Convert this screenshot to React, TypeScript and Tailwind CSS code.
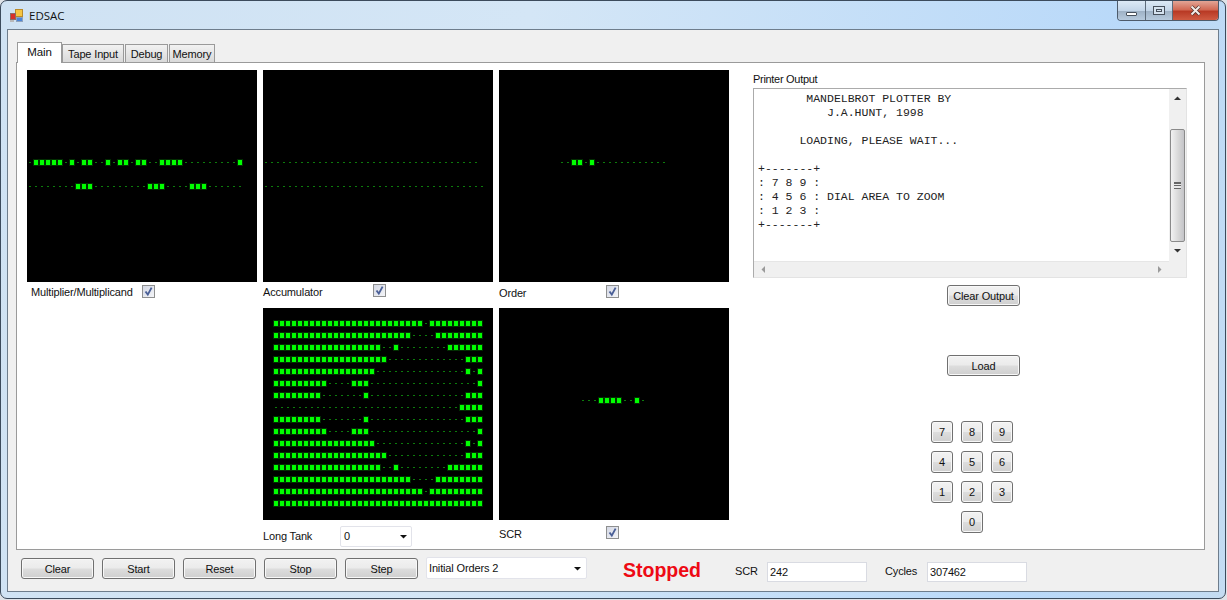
const BIG = "#00ff00";
const HALO = "#012e01";
const SMALL = "#0c7c0c";

type Row = { x: number; y: number; runs: number[] };

// runs alternate lit / unlit counts, starting with lit
function Display({ rows }: { rows: Row[] }) {
  const halos: React.ReactNode[] = [];
  const rects: React.ReactNode[] = [];
  rows.forEach((row, r) => {
    let i = 0;
    row.runs.forEach((count, k) => {
      for (let n = 0; n < count; n++, i++) {
        const cx = row.x + i * 6;
        if (k % 2 === 0) {
          halos.push(<rect key={`h${r}-${i}`} x={cx - 3} y={row.y - 3} width={6} height={7} fill={HALO} />);
          rects.push(<rect key={`${r}-${i}`} x={cx - 2} y={row.y - 2} width={4} height={5} fill={BIG} />);
        } else {
          rects.push(<rect key={`${r}-${i}`} x={cx - 1} y={row.y} width={2} height={1} fill={SMALL} />);
        }
      }
    });
  });
  return (
    <svg width={230} height={212} className="block bg-black" shapeRendering="crispEdges">
      {halos}
      {rects}
    </svg>
  );
}

const tankPattern = [
  [25, 1, 9],
  [23, 4, 8],
  [18, 2, 1, 8, 6],
  [19, 13, 3],
  [17, 15, 1, 1, 1],
  [9, 4, 3, 18, 1],
  [8, 7, 1, 16, 3],
  [0, 31, 4],
  [8, 7, 1, 16, 3],
  [9, 4, 3, 18, 1],
  [17, 15, 1, 1, 1],
  [19, 13, 3],
  [18, 2, 1, 8, 6],
  [23, 4, 8],
  [25, 1, 9],
  [35],
];
const longTank = tankPattern.map((runs, i) => ({ x: 13, y: 15 + i * 12, runs }));

function Check({ className }: { className: string }) {
  return (
    <div className={`h-[13px] w-[13px] border border-[#8e8f8f] bg-gradient-to-br from-[#d4d8e4] to-[#f4f5f8] ${className}`}>
      <svg width={11} height={11} viewBox="0 0 11 11" className="block">
        <path d="M2.5 5.5 L4.8 8.6 L8.6 1.6" fill="none" stroke="#4a5f97" strokeWidth={1.9} />
      </svg>
    </div>
  );
}

function Btn({ label, className }: { label: string; className: string }) {
  return (
    <button
      className={`flex items-center justify-center rounded-[3px] border border-[#707070] bg-[linear-gradient(#f2f2f2_0%,#ebebeb_48%,#dddddd_52%,#cfcfcf_100%)] text-[#111] shadow-[inset_0_0_0_1px_#f8f8f8] ${className}`}
    >
      {label}
    </button>
  );
}

function Arrow({ d, fill = "#333", className }: { d: string; fill?: string; className?: string }) {
  return (
    <svg width={7} height={7} viewBox="0 0 7 7" className={`block ${className ?? ""}`}>
      <path d={d} fill={fill} />
    </svg>
  );
}

const printerText = `       MANDELBROT PLOTTER BY
          J.A.HUNT, 1998

      LOADING, PLEASE WAIT...

+-------+
: 7 8 9 :
: 4 5 6 : DIAL AREA TO ZOOM
: 1 2 3 :
+-------+`;

function Combo({ value, className }: { value: string; className: string }) {
  return (
    <div className={`flex items-center justify-between rounded-[2px] border border-[#e2e3ea] bg-white ${className}`}>
      <span className="pb-[1px]">{value}</span>
      <Arrow d="M0 2 H7 L3.5 5.5 Z" fill="#111" />
    </div>
  );
}

export default function App() {
  return (
    <div className="h-[600px] w-[1227px] overflow-hidden bg-[#dfe3e8] font-['Liberation_Sans',sans-serif] text-[11px] leading-[14px] tracking-[-0.15px] text-[#111]">
      <div className="h-[599px] w-[1226px] overflow-hidden rounded-[7px] border border-[#3c4b5c] bg-[linear-gradient(100deg,#cfe2f3_0%,#d4e6f6_40%,#b9d9f9_85%,#c4dcf2_100%)]">
        {/* title bar */}
        <div className="flex h-[28px] items-start justify-between">
          <div className="flex items-center pl-[8px] pt-[7px]">
            <svg width={14} height={14} viewBox="0 0 14 14" className="block" shapeRendering="crispEdges">
              <rect x={6} y={0} width={7} height={7} fill="#f5c542" stroke="#b98a2a" strokeWidth={1} />
              <rect x={1} y={4} width={5} height={6} fill="#d8302a" stroke="#8d6a66" strokeWidth={1} />
              <rect x={7} y={8} width={6} height={4} fill="#4c86d8" stroke="#8ea2bd" strokeWidth={1} />
              <rect x={1} y={11} width={4} height={2} fill="#b9b9b9" />
            </svg>
            <span className="ml-[6px] font-['Open_Sans',sans-serif] text-[11.5px] leading-[16px] tracking-normal text-[#111]">EDSAC</span>
          </div>
          <div className="mr-[6px] flex h-[20px] w-[102px] overflow-hidden rounded-b-[4px] border border-t-0 border-[#4d5b6b]">
            <div className="flex w-[28px] items-end justify-center border-r border-[#5d6b7a] bg-[linear-gradient(#dce9f6_0%,#c3d5e8_50%,#9fb2c6_55%,#b7cadd_100%)] pb-[4px]">
              <div className="h-[4px] w-[11px] rounded-[1px] border border-[#47505c] bg-white" />
            </div>
            <div className="flex w-[27px] items-center justify-center border-r border-[#5d6b7a] bg-[linear-gradient(#dce9f6_0%,#c3d5e8_50%,#9fb2c6_55%,#b7cadd_100%)]">
              <div className="h-[9px] w-[12px] border border-[#47505c] bg-[#d5e2ef] p-[2px]">
                <div className="h-full w-full border border-[#47505c]" />
              </div>
            </div>
            <div className="flex flex-1 items-center justify-center bg-[linear-gradient(#e2a596_0%,#d26a55_45%,#b93a25_55%,#cf5b42_100%)]">
              <svg width={11} height={11} viewBox="0 0 11 11" className="block">
                <path d="M1.5 1.5 L9.5 9.5 M9.5 1.5 L1.5 9.5" stroke="#45302c" strokeWidth={3.2} />
                <path d="M1.5 1.5 L9.5 9.5 M9.5 1.5 L1.5 9.5" stroke="#f5ece8" strokeWidth={2} />
              </svg>
            </div>
          </div>
        </div>

        {/* client area */}
        <div className="ml-[6px] h-[563px] w-[1212px] border border-[#6e7d8c] bg-[#f0f0f0]">
          {/* tabs */}
          <div className="flex h-[32px] items-end pl-[9px]">
            <div className="z-10 -mb-[1px] flex h-[21px] w-[45px] items-center justify-center border border-b-0 border-[#9a9a9a] bg-white pb-[3px] text-[11.5px]">Main</div>
            <div className="flex h-[18px] w-[62px] items-center justify-center border border-b-0 border-[#9a9a9a] bg-[linear-gradient(#f2f2f2,#d9d9d9)]">Tape Input</div>
            <div className="ml-[1px] flex h-[18px] w-[43px] items-center justify-center border border-b-0 border-[#9a9a9a] bg-[linear-gradient(#f2f2f2,#d9d9d9)]">Debug</div>
            <div className="ml-[1px] flex h-[18px] w-[46px] items-center justify-center border border-b-0 border-[#9a9a9a] bg-[linear-gradient(#f2f2f2,#d9d9d9)]">Memory</div>
          </div>

          {/* tab page */}
          <div className="ml-[8px] flex h-[488px] w-[1189px] border border-[#9a9a9a] bg-white pl-[10px] pt-[7px]">
            <div className="grid w-[702px] grid-cols-[230px_230px_230px] grid-rows-[238px_240px] gap-x-[6px]">
              <div>
                <Display
                  rows={[
                    { x: 3, y: 92, runs: [0, 1, 5, 1, 1, 1, 2, 2, 1, 1, 2, 1, 2, 2, 4, 9, 1] },
                    { x: 3, y: 116, runs: [0, 8, 3, 9, 3, 4, 3, 6] },
                  ]}
                />
                <div className="flex items-start pl-[4px]">
                  <span className="mt-[3px] w-[111px]">Multiplier/Multiplicand</span>
                  <Check className="mt-[3px]" />
                </div>
              </div>
              <div>
                <Display
                  rows={[
                    { x: 3, y: 92, runs: [0, 36] },
                    { x: 3, y: 116, runs: [0, 37] },
                  ]}
                />
                <div className="flex items-start">
                  <span className="mt-[3px] w-[110px]">Accumulator</span>
                  <Check className="mt-[2px]" />
                </div>
              </div>
              <div>
                <Display rows={[{ x: 63, y: 92, runs: [0, 2, 2, 1, 1, 12] }]} />
                <div className="flex items-start">
                  <span className="mt-[4px] w-[107px]">Order</span>
                  <Check className="mt-[3px]" />
                </div>
              </div>
              <div />
              <div>
                <Display rows={longTank} />
                <div className="flex items-start">
                  <span className="mt-[9px] w-[77px]">Long Tank</span>
                  <Combo value="0" className="mt-[6px] h-[21px] w-[72px] pl-[3px] pr-[4px]" />
                </div>
              </div>
              <div>
                <Display rows={[{ x: 84, y: 92, runs: [0, 3, 4, 2, 1, 1] }]} />
                <div className="flex items-start">
                  <span className="mt-[7px] w-[107px]">SCR</span>
                  <Check className="mt-[6px]" />
                </div>
              </div>
            </div>

            {/* printer column */}
            <div className="ml-[24px] w-[434px]">
              <div className="mt-[2px] tracking-[-0.3px]">Printer Output</div>
              <div className="mt-[2px] h-[190px] w-[434px] border border-[#ababab] border-b-[#e3e3e3] border-r-[#e3e3e3] bg-[#f0f0f0]">
                <div className="flex h-[172px]">
                  <div className="h-full w-[415px] overflow-hidden whitespace-pre bg-white pl-[4px] pt-[3px] font-['Liberation_Mono',monospace] text-[11.5px] leading-[14px] tracking-normal text-[#222]">
                    {printerText}
                  </div>
                  <div className="flex w-[17px] flex-col items-center bg-[#f0f0f0]">
                    <Arrow d="M0 5 H7 L3.5 1.5 Z" className="mt-[6px]" />
                    <div className="mt-[27px] flex h-[113px] w-[15px] items-center justify-center rounded-[2px] border border-[#8a8a8a] bg-[linear-gradient(90deg,#f2f2f2,#d6d6d6_60%,#c4c4c8)]">
                      <div className="h-[7px] w-[7px] border-y border-[#666] bg-[linear-gradient(#666_1px,#e8e8e8_1px,#e8e8e8_2px,#666_2px,#666_3px,#e8e8e8_3px)]" />
                    </div>
                    <Arrow d="M0 2 H7 L3.5 5.5 Z" className="mt-[5px]" />
                  </div>
                </div>
                <div className="flex h-[16px] w-[415px] items-center justify-between border-t border-[#e6e6e6] px-[6px]">
                  <Arrow d="M5 0 V7 L1.5 3.5 Z" fill="#9a9a9a" />
                  <Arrow d="M2 0 V7 L5.5 3.5 Z" fill="#9a9a9a" />
                </div>
              </div>
              <Btn label="Clear Output" className="ml-[194px] mt-[7px] h-[21px] w-[73px]" />
              <Btn label="Load" className="ml-[194px] mt-[49px] h-[21px] w-[73px]" />
              <div className="ml-[178px] mt-[45px] grid w-[82px] grid-cols-[22px_22px_22px] gap-x-[8px] gap-y-[8px]">
                {["7", "8", "9", "4", "5", "6", "1", "2", "3"].map((n) => (
                  <Btn key={n} label={n} className="h-[22px] w-[22px]" />
                ))}
                <Btn label="0" className="col-start-2 h-[22px] w-[22px]" />
              </div>
            </div>
          </div>

          {/* bottom strip */}
          <div className="flex items-start pl-[13px] pt-[8px]">
            <div className="flex gap-x-[8px]">
              {["Clear", "Start", "Reset", "Stop", "Step"].map((l) => (
                <Btn key={l} label={l} className="h-[21px] w-[73px]" />
              ))}
            </div>
            <Combo value="Initial Orders 2" className="-mt-[1px] ml-[8px] h-[22px] w-[161px] pl-[2px] pr-[5px]" />
            <span className="ml-[36px] mt-[1px] text-[19.5px] font-bold leading-[23px] tracking-normal text-[#ee0a14]">Stopped</span>
            <span className="ml-[34px] mt-[6px] w-[32px]">SCR</span>
            <div className="mt-[4px] h-[20px] w-[100px] border border-[#d9dbe2] bg-white pl-[2px] leading-[18px]">242</div>
            <span className="ml-[18px] mt-[6px] w-[42px]">Cycles</span>
            <div className="mt-[4px] h-[20px] w-[100px] border border-[#d9dbe2] bg-white pl-[2px] leading-[18px]">307462</div>
          </div>
        </div>
      </div>
    </div>
  );
}
